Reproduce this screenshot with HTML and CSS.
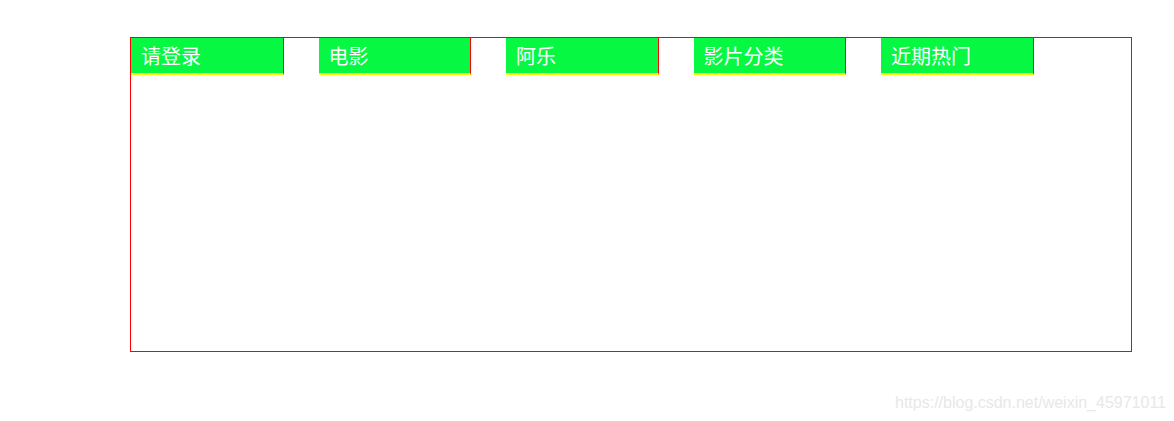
FILE: index.html
```html
<!DOCTYPE html>
<html lang="zh">
<head>
<meta charset="utf-8">
<title>nav</title>
<link rel="stylesheet" href="styles.css">
</head>
<body>
<div class="box">
  <ul class="nav">
    <li class="tab">请登录</li>
    <li class="tab">电影</li>
    <li class="tab">阿乐</li>
    <li class="tab">影片分类</li>
    <li class="tab">近期热门</li>
  </ul>
</div>
<div class="watermark">https://blog.csdn.net/weixin_45971011</div>
</body>
</html>
```
FILE: styles.css
```css
html, body {
  margin: 0;
  padding: 0;
  background: #fff;
}
body {
  position: relative;
  width: 1174px;
  height: 421px;
  overflow: hidden;
  font-family: "Noto Sans CJK SC", "Liberation Sans", sans-serif;
}
.box {
  margin: 37px 0 0 130px;
  width: 1000px;
  height: 313px;
  border: 1px solid #ff0000;
}
.nav {
  list-style: none;
  margin: 0;
  padding: 0;
  display: flex;
  gap: 35px;
}
.tab {
  box-sizing: border-box;
  flex: 0 0 152.5px;
  width: 152.5px;
  height: 37px;
  background: #06f843;
  border-right: 1px solid #ff0000;
  border-bottom: 2px solid #ffff00;
  color: #ffffff;
  font-size: 20px;
  line-height: 36px;
  padding-left: 10px;
}
.watermark {
  position: absolute;
  left: 895px;
  top: 393px;
  font-family: "Liberation Sans", Arial, sans-serif;
  font-size: 16px;
  line-height: 20px;
  color: #e8e8e8;
  white-space: nowrap;
}
```
